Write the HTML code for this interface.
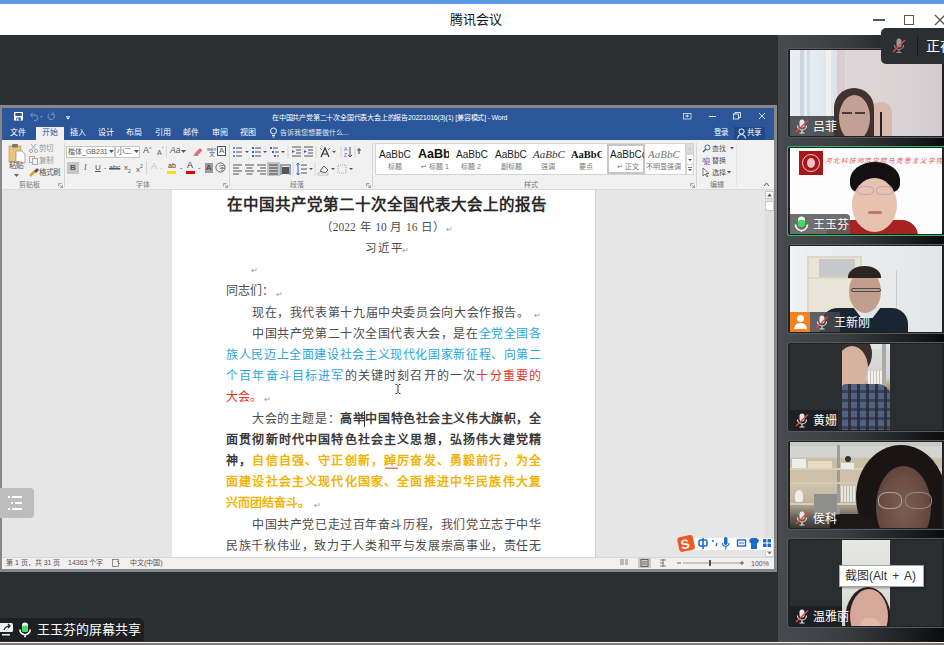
<!DOCTYPE html>
<html lang="zh-CN"><head><meta charset="utf-8">
<style>
*{margin:0;padding:0;box-sizing:border-box}
html,body{width:944px;height:645px;overflow:hidden;background:#2d3033;font-family:"Liberation Sans",sans-serif;position:relative}
.a{position:absolute}
#topstrip{left:0;top:0;width:944px;height:4px;background:#5a9ae4}
#titlebar{left:0;top:4px;width:944px;height:31px;background:#fff}
#title{left:450px;top:9px;font-size:13px;color:#111;white-space:nowrap}
#main{left:0;top:35px;width:778px;height:610px;background:#2d3033}
#rpanel{left:778px;top:35px;width:166px;height:610px;background:linear-gradient(90deg,#474a4e 0%,#3a3d41 40%,#1c1d1f 80%,#0b0b0c 100%)}
#word{left:0;top:105px;width:777px;height:467px;background:#878787}
#wblue{left:2px;top:108px;width:772px;height:32px;background:#2b579a}
#ribbon{left:2px;top:140px;width:772px;height:50px;background:#f1f1f1;border-bottom:1px solid #dadada}
#docbg{left:2px;top:190px;width:772px;height:367px;background:#e6e6e6}
#page{left:172px;top:190px;width:424px;height:367px;background:#fff;border-right:1px solid #d2d2d2}
#status{left:2px;top:557px;width:772px;height:12px;background:#f0f0f0;border-top:1px solid #d8d8d8}
</style></head><body>
<div class="a" id="topstrip"></div>
<div class="a" id="titlebar"></div>
<div class="a" id="title">腾讯会议</div>
<div class="a" id="main"></div>
<div class="a" id="rpanel"></div>
<div class="a" id="word"></div>
<div class="a" id="wblue"></div>
<div class="a" id="ribbon"></div>
<div class="a" id="docbg"></div>
<div class="a" id="page"></div>
<div class="a" id="status"></div>

<style>
.ln{position:absolute;white-space:nowrap;text-align:justify;text-align-last:justify;font-family:"Liberation Serif",serif;font-size:12px;line-height:14px;color:#4c4c4c;height:14px}
.b{font-weight:bold;color:#3a3a3a}
.cb{color:#2aa6df}
.cr{color:#e0352c}
.cg{color:#f2b400;font-weight:bold}
.pm{color:#999;font-size:8px;letter-spacing:0}
</style>
<div class="ln b" style="left:227px;top:196px;width:310px;font-size:15.5px;line-height:17px;height:17px;color:#2a2a2a">在中国共产党第二十次全国代表大会上的报告</div>
<div class="a pm" style="left:538px;top:203px">↵</div>
<div class="ln" style="left:321px;top:220px;width:123px;font-size:11.5px">（2022 年 10 月 16 日）</div>
<div class="a pm" style="left:446px;top:225px">↵</div>
<div class="ln" style="left:365px;top:241px;width:37px;font-size:11.5px">习近平</div>
<div class="a pm" style="left:402px;top:246px">↵</div>
<div class="a pm" style="left:251px;top:266px">↵</div>
<div class="ln" style="left:226px;top:284px;width:48px">同志们：</div>
<div class="a pm" style="left:276px;top:290px">↵</div>
<div class="ln" style="left:252px;top:306px;width:277px">现在，我代表第十九届中央委员会向大会作报告。</div>
<div class="a pm" style="left:534px;top:311px">↵</div>
<div class="ln" style="left:252px;top:327px;width:289px">中国共产党第二十次全国代表大会，是在<span class="cb">全党全国各</span></div>
<div class="ln cb" style="left:226px;top:348px;width:315px">族人民迈上全面建设社会主义现代化国家新征程、向第二</div>
<div class="ln" style="left:226px;top:369px;width:315px"><span class="cb">个百年奋斗目标进军</span>的关键时刻召开的一次<span class="cr">十分重要的</span></div>
<div class="ln cr" style="left:226px;top:390px;width:36px">大会。</div>
<div class="a pm" style="left:264px;top:395px">↵</div>
<div class="ln" style="left:252px;top:412px;width:289px">大会的主题是：<span class="b">高举中国特色社会主义伟大旗帜，全</span></div>
<div class="ln b" style="left:226px;top:433px;width:315px">面贯彻新时代中国特色社会主义思想，弘扬伟大建党精</div>
<div class="ln" style="left:226px;top:454px;width:315px"><span class="b">神，</span><span class="cg">自信自强、守正创新，踔厉奋发、勇毅前行，为全</span></div>
<div class="ln cg" style="left:226px;top:475px;width:315px">面建设社会主义现代化国家、全面推进中华民族伟大复</div>
<div class="ln cg" style="left:226px;top:496px;width:84px">兴而团结奋斗。</div>
<div class="a pm" style="left:314px;top:501px">↵</div>
<div class="ln" style="left:252px;top:518px;width:289px">中国共产党已走过百年奋斗历程，我们党立志于中华</div>
<div class="ln" style="left:226px;top:539px;width:315px">民族千秋伟业，致力于人类和平与发展崇高事业，责任无</div>

<style>
.wt{position:absolute;font-size:8px;line-height:9px;color:#fff;white-space:nowrap}
.rt{position:absolute;font-size:7.5px;line-height:9px;color:#555;white-space:nowrap}
.gl{position:absolute;font-size:7px;line-height:8px;color:#777;white-space:nowrap}
.sep{position:absolute;width:1px;background:#d6d6d6}
.ic{position:absolute}
</style>
<svg class="ic" style="left:395px;top:384px" width="6" height="10"><path d="M0.5 0.5h1.5l1 1 1-1h1.5M3 1.5v7M0.5 9.5h1.5l1-1 1 1h1.5" fill="none" stroke="#222" stroke-width="0.9"/></svg>
<div class="a" style="left:364px;top:411px;width:1px;height:16px;background:#333"></div>
<svg class="ic" style="left:385px;top:467px" width="14" height="3"><path d="M0 2l1-1.5 1 1.5 1-1.5 1 1.5 1-1.5 1 1.5 1-1.5 1 1.5 1-1.5 1 1.5 1-1.5 1 1.5 1-1.5" fill="none" stroke="#e02020" stroke-width="0.7"/></svg>
<!-- Word title bar -->
<svg class="ic" style="left:14px;top:112px" width="9" height="9" viewBox="0 0 9 9"><rect x="0" y="0" width="9" height="8.5" fill="#fff"/><rect x="1.3" y="1" width="6.4" height="3" fill="#2b579a"/><rect x="2.3" y="5.5" width="4.5" height="3" fill="#2b579a"/><rect x="3" y="6.5" width="1.5" height="2" fill="#fff"/></svg>
<svg class="ic" style="left:29px;top:111px" width="28" height="11" viewBox="0 0 28 11"><path d="M1.5 4h4.5a2.8 2.8 0 0 1 0 5.6H5M1.5 4l2.3-2.3M1.5 4l2.3 2.3" fill="none" stroke="#7c98c8" stroke-width="1"/><path d="M11 5h3l-1.5 1.8z" fill="#7c98c8"/><path d="M24 2.5a3.3 3.3 0 1 1-3.5 0" fill="none" stroke="#7c98c8" stroke-width="1"/><path d="M24 0.5v3h-2" fill="none" stroke="#7c98c8" stroke-width="0.9"/></svg>
<svg class="ic" style="left:66px;top:116px" width="4" height="4"><rect x="0" y="0" width="4" height="0.7" fill="#fff"/><path d="M0 1.5h4L2 3.5z" fill="#fff"/></svg>
<div class="wt" style="left:272px;top:113px;font-size:7px;letter-spacing:-0.2px">在中国共产党第二十次全国代表大会上的报告20221016(3)(1) [兼容模式] - Word</div>
<svg class="ic" style="left:683px;top:113px" width="9" height="7"><rect x="0.5" y="0.5" width="7.5" height="5.5" fill="none" stroke="#dfe6f0" stroke-width="0.8"/><path d="M2.5 3h3.5M4.2 1.5v3" stroke="#fff" stroke-width="0.8"/></svg>
<div class="a" style="left:709px;top:116px;width:7px;height:1px;background:#fff"></div>
<svg class="ic" style="left:733px;top:112px" width="8" height="8"><rect x="0.5" y="2" width="5" height="5" fill="none" stroke="#fff" stroke-width="0.8"/><path d="M2 2V0.5h5.5v5H5.5" fill="none" stroke="#fff" stroke-width="0.8"/></svg>
<svg class="ic" style="left:758px;top:112px" width="8" height="8"><path d="M1 1l6 6M7 1l-6 6" stroke="#fff" stroke-width="0.8"/></svg>
<!-- tabs -->
<div class="a" style="left:36px;top:127px;width:28px;height:13px;background:#f1f1f1"></div>
<div class="wt" style="left:10px;top:128px">文件</div>
<div class="wt" style="left:42px;top:128px;color:#2b579a">开始</div>
<div class="wt" style="left:70px;top:128px">插入</div>
<div class="wt" style="left:98px;top:128px">设计</div>
<div class="wt" style="left:126px;top:128px">布局</div>
<div class="wt" style="left:155px;top:128px">引用</div>
<div class="wt" style="left:183px;top:128px">邮件</div>
<div class="wt" style="left:212px;top:128px">审阅</div>
<div class="wt" style="left:240px;top:128px">视图</div>
<svg class="ic" style="left:270px;top:127px" width="7" height="11"><circle cx="3.5" cy="4" r="3" fill="none" stroke="#fff" stroke-width="0.9"/><path d="M2 8.5h3M2.5 10h2" stroke="#fff" stroke-width="0.9"/></svg>
<div class="wt" style="left:280px;top:128px;font-size:7px;color:#dfe6f0">告诉我您想要做什么...</div>
<div class="wt" style="left:714px;top:128px;font-size:7.5px">登录</div>
<div class="a" style="left:734px;top:127px;width:31px;height:13px;background:#1f4a87"></div>
<svg class="ic" style="left:737px;top:128px" width="9" height="11"><circle cx="4.5" cy="3.5" r="2.6" fill="none" stroke="#fff" stroke-width="1"/><path d="M0.5 10.5a4 4 0 0 1 8 0" fill="none" stroke="#fff" stroke-width="1"/></svg>
<div class="wt" style="left:747px;top:128px;font-size:7.5px">共享</div>

<!-- ribbon: clipboard -->
<svg class="ic" style="left:8px;top:143px" width="18" height="21" viewBox="0 0 18 21"><rect x="1" y="3" width="12" height="16" fill="#e9c77a" stroke="#b8964a" stroke-width="0.6"/><rect x="4" y="1" width="6" height="3.5" rx="1" fill="#777"/><path d="M8 8h6l3 3v9H8z" fill="#fff" stroke="#8a8a8a" stroke-width="0.7"/></svg>
<div class="rt" style="left:9px;top:161px">粘贴</div>
<svg class="ic" style="left:14px;top:174px" width="5" height="4"><path d="M0 0h5L2.5 3z" fill="#666"/></svg>
<svg class="ic" style="left:29px;top:144px" width="9" height="9"><circle cx="2" cy="7" r="1.6" fill="none" stroke="#aaa"/><circle cx="7" cy="7" r="1.6" fill="none" stroke="#aaa"/><path d="M2 6L7 0M7 6L2 0" stroke="#aaa"/></svg>
<div class="rt" style="left:39px;top:144px;color:#999">剪切</div>
<svg class="ic" style="left:29px;top:156px" width="10" height="9"><rect x="0.5" y="0.5" width="5" height="6" fill="none" stroke="#aaa"/><rect x="3.5" y="2.5" width="5" height="6" fill="#f1f1f1" stroke="#aaa"/></svg>
<div class="rt" style="left:39px;top:156px;color:#999">复制</div>
<svg class="ic" style="left:29px;top:168px" width="10" height="9"><path d="M1 8l5-5" stroke="#e0a030" stroke-width="2.5"/><path d="M5 3l3-3 2 2-3 3z" fill="#555"/></svg>
<div class="rt" style="left:39px;top:168px">格式刷</div>
<div class="gl" style="left:19px;top:181px">剪贴板</div>
<svg class="ic" style="left:58px;top:183px" width="5" height="5"><path d="M0.5 0.5h3M0.5 0.5v3M1.5 1.5l3 3M4.5 2v2.5H2" fill="none" stroke="#888" stroke-width="0.7"/></svg>
<div class="sep" style="left:64px;top:143px;height:44px"></div>

<!-- font group -->
<div class="a" style="left:66px;top:146px;width:49px;height:12px;background:#fff;border:1px solid #c6c6c6"></div>
<div class="rt" style="left:68px;top:147px;font-size:7px;width:40px;overflow:hidden">楷体_GB2312</div>
<svg class="ic" style="left:109px;top:150px" width="5" height="4"><path d="M0 0h5L2.5 3z" fill="#555"/></svg>
<div class="a" style="left:115px;top:146px;width:25px;height:12px;background:#fff;border:1px solid #c6c6c6"></div>
<div class="rt" style="left:117px;top:147px;font-size:7.5px">小二</div>
<svg class="ic" style="left:134px;top:150px" width="5" height="4"><path d="M0 0h5L2.5 3z" fill="#555"/></svg>
<div class="rt" style="left:143px;top:146px;font-size:9px">A</div><div class="rt" style="left:149px;top:145px;font-size:5px;color:#2b579a">^</div>
<div class="rt" style="left:157px;top:148px;font-size:7px">A</div><div class="rt" style="left:162px;top:145px;font-size:5px;color:#2b579a">ˇ</div>
<div class="sep" style="left:166px;top:146px;height:12px"></div>
<div class="rt" style="left:170px;top:146px;font-size:8.5px;font-style:italic">Aa</div>
<svg class="ic" style="left:181px;top:150px" width="5" height="4"><path d="M0 0h5L2.5 3z" fill="#555"/></svg>
<svg class="ic" style="left:193px;top:146px" width="10" height="10"><path d="M1 8l6-6 2.5 2.5-6 6z" fill="#e86a8a"/><path d="M0 9.5h5" stroke="#888" stroke-width="0.7"/></svg>
<div class="rt" style="left:207px;top:145px;font-size:5px;color:#555">wén</div><div class="rt" style="left:209px;top:150px;font-size:6px;color:#2b579a">文</div>
<div class="a" style="left:217px;top:146px;width:9px;height:10px;border:1px solid #555;background:#fff"></div><div class="rt" style="left:219px;top:146px;font-size:8px;line-height:10px">A</div>
<div class="a" style="left:67px;top:162px;width:12px;height:12px;background:#c6c6c6"></div>
<div class="rt" style="left:70px;top:163px;font-weight:bold;font-size:8px">B</div>
<div class="rt" style="left:84px;top:163px;font-style:italic;font-size:8px;font-family:'Liberation Serif',serif">I</div>
<div class="rt" style="left:95px;top:163px;text-decoration:underline;font-size:8px">U</div>
<div class="rt" style="left:104px;top:163px;font-size:7px">-</div>
<div class="rt" style="left:109px;top:163px;font-size:7px;text-decoration:line-through">abc</div>
<div class="rt" style="left:124px;top:163px;font-size:8px">x<sub style="font-size:5px;color:#2b579a">2</sub></div>
<div class="rt" style="left:136px;top:162px;font-size:8px">x<sup style="font-size:5px;color:#2b579a">2</sup></div>
<div class="sep" style="left:146px;top:162px;height:12px"></div>
<div class="rt" style="left:151px;top:162px;font-size:9px;color:#bbb">A</div>
<div class="rt" style="left:160px;top:163px;color:#bbb">-</div>
<div class="rt" style="left:168px;top:161px;font-size:7px;color:#333">ab</div><div class="a" style="left:167px;top:171px;width:9px;height:3px;background:#f4e300"></div>
<div class="rt" style="left:180px;top:163px">-</div>
<div class="rt" style="left:187px;top:161px;font-size:9px;color:#333">A</div><div class="a" style="left:186px;top:171px;width:9px;height:3px;background:#e00000"></div>
<div class="rt" style="left:198px;top:163px">-</div>
<div class="a" style="left:205px;top:163px;width:8px;height:10px;background:#9a9a9a"></div><div class="rt" style="left:206px;top:163px;font-size:8px;color:#333">A</div>
<svg class="ic" style="left:215px;top:162px" width="11" height="11"><circle cx="5.5" cy="5.5" r="4.6" fill="none" stroke="#555" stroke-width="0.9"/><text x="3.5" y="8" font-size="6" fill="#555">字</text></svg>
<div class="gl" style="left:136px;top:181px">字体</div>
<svg class="ic" style="left:223px;top:183px" width="5" height="5"><path d="M0.5 0.5h3M0.5 0.5v3M1.5 1.5l3 3M4.5 2v2.5H2" fill="none" stroke="#888" stroke-width="0.7"/></svg>
<div class="sep" style="left:229px;top:143px;height:44px"></div>

<!-- paragraph group -->
<svg class="ic" style="left:232px;top:146px" width="130" height="12" viewBox="0 0 130 12">
 <g fill="#2b6cc4"><circle cx="2" cy="2" r="1"/><circle cx="2" cy="6" r="1"/><circle cx="2" cy="10" r="1"/></g>
 <g stroke="#555" stroke-width="1"><path d="M4 2h6M4 6h6M4 10h6"/></g><path d="M13 5h4l-2 2z" fill="#555"/>
 <g fill="#2b6cc4" font-size="4"><rect x="20" y="1" width="2" height="2"/><rect x="20" y="5" width="2" height="2"/><rect x="20" y="9" width="2" height="2"/></g>
 <g stroke="#555"><path d="M23 2h6M23 6h6M23 10h6"/></g><path d="M31 5h4l-2 2z" fill="#555"/>
 <g fill="#2b6cc4"><rect x="38" y="1" width="2" height="2"/><rect x="40" y="5" width="2" height="2"/><rect x="42" y="9" width="2" height="2"/></g>
 <g stroke="#555"><path d="M41 2h5M43 6h4M45 10h2"/></g><path d="M49 5h4l-2 2z" fill="#555"/>
 <path d="M56 0v12" stroke="#d6d6d6"/>
 <g stroke="#555"><path d="M60 1h9M64 4h5M64 7h5M60 10h9"/></g><path d="M63 5.5l-3-1.5v3z" fill="#2b6cc4"/>
 <g stroke="#555"><path d="M72 1h9M76 4h5M76 7h5M72 10h9"/></g><path d="M72 4l3 1.5-3 1.5z" fill="#2b6cc4"/>
 <path d="M84 0v12" stroke="#d6d6d6"/>
 <path d="M89 11l4-9 4 9M90.5 8h5" fill="none" stroke="#333" stroke-width="1.2"/><path d="M88 2l2 2M98 2l-2 2" stroke="#2b6cc4"/><path d="M100 5h4l-2 2z" fill="#555"/>
 <path d="M109 0v12" stroke="#d6d6d6"/>
 <text x="112" y="5" font-size="5" fill="#2b6cc4">A</text><text x="112" y="11" font-size="5" fill="#a040c0">Z</text><path d="M118 1v10M116 9l2 2 2-2" fill="none" stroke="#555"/>
 <path d="M123 0v12" stroke="#d6d6d6"/>
 <path d="M127 2v6M125 4h4" stroke="#555" stroke-width="1.2"/>
</svg>
<svg class="ic" style="left:232px;top:162px" width="125" height="14" viewBox="0 0 125 14">
 <g stroke="#555" stroke-width="1"><path d="M1 3h9M1 6h6M1 9h9M1 12h6"/><path d="M13 3h9M14.5 6h6M13 9h9M14.5 12h6"/><path d="M25 3h9M28 6h6M25 9h9M28 12h6"/></g>
 <rect x="35" y="0" width="13" height="14" fill="#c4c4c4"/>
 <g stroke="#444"><path d="M37 3h9M37 6h9M37 9h9M37 12h9"/></g>
 <g stroke="#2b579a"><path d="M49 2v11M58 2v11"/></g><rect x="50" y="5" width="7" height="7" fill="#555"/><path d="M50 3h7" stroke="#555"/>
 <path d="M61 0v14" stroke="#d6d6d6"/>
 <g stroke="#555"><path d="M69 3h6M69 7h6M69 11h6"/></g><path d="M66 1v12" stroke="#2b6cc4"/><path d="M64.5 3l1.5-2 1.5 2M64.5 11l1.5 2 1.5-2" fill="none" stroke="#2b6cc4"/><path d="M77 6h4l-2 2z" fill="#555"/>
 <path d="M83 0v14" stroke="#d6d6d6"/>
 <path d="M88 9l4-5 4 4-3 3z" fill="none" stroke="#555"/><rect x="86" y="11" width="10" height="2" fill="#fff" stroke="#999" stroke-width="0.6"/><path d="M99 6h4l-2 2z" fill="#555"/>
 <rect x="106" y="3" width="8" height="8" fill="none" stroke="#aaa" stroke-dasharray="1 1"/><path d="M117 6h4l-2 2z" fill="#555"/>
</svg>
<div class="gl" style="left:290px;top:181px">段落</div>
<svg class="ic" style="left:366px;top:183px" width="5" height="5"><path d="M0.5 0.5h3M0.5 0.5v3M1.5 1.5l3 3M4.5 2v2.5H2" fill="none" stroke="#888" stroke-width="0.7"/></svg>
<div class="sep" style="left:372px;top:143px;height:44px"></div>

<!-- styles gallery -->
<div class="a" style="left:375px;top:143px;width:311px;height:32px;background:#fff;border:1px solid #d4d4d4"></div>
<div class="rt" style="left:379px;top:148px;font-size:10px;line-height:13px;color:#222">AaBbC</div><div class="gl" style="left:388px;top:163px">标题</div>
<div class="rt" style="left:418px;top:147px;font-size:12.5px;line-height:15px;font-weight:bold;color:#111;width:31px;overflow:hidden">AaBb</div><div class="gl" style="left:421px;top:163px">↵ 标题 1</div>
<div class="rt" style="left:456px;top:148px;font-size:10px;line-height:13px;color:#222">AaBbC</div><div class="gl" style="left:461px;top:163px">标题 2</div>
<div class="rt" style="left:495px;top:148px;font-size:10px;line-height:13px;color:#222">AaBbC</div><div class="gl" style="left:501px;top:163px">副标题</div>
<div class="rt" style="left:533px;top:148px;font-size:11px;line-height:13px;color:#333;font-style:italic;font-family:'Liberation Serif',serif">AaBbC</div><div class="gl" style="left:541px;top:163px">强调</div>
<div class="rt" style="left:571px;top:148px;font-size:10.5px;line-height:13px;color:#111;font-weight:bold;font-family:'Liberation Serif',serif;width:31px;overflow:hidden">AaBbC</div><div class="gl" style="left:579px;top:163px">要点</div>
<div class="a" style="left:607px;top:144px;width:38px;height:30px;border:2px solid #c6c6c6"></div>
<div class="rt" style="left:610px;top:148px;font-size:10px;line-height:13px;color:#222;width:34px;overflow:hidden">AaBbCc</div><div class="gl" style="left:617px;top:163px">↵ 正文</div>
<div class="rt" style="left:648px;top:148px;font-size:11px;line-height:13px;color:#777;font-style:italic;font-family:'Liberation Serif',serif;width:36px;overflow:hidden">AaBbC</div><div class="gl" style="left:646px;top:163px">不明显强调</div>
<div class="a" style="left:686px;top:143px;width:8px;height:32px;background:#fff;border:1px solid #d4d4d4"></div>
<div class="a" style="left:687px;top:144px;width:6px;height:10px;background:#dcdcdc"></div>
<div class="a" style="left:687px;top:154px;width:6px;height:1px;background:#d4d4d4"></div>
<div class="a" style="left:687px;top:164px;width:6px;height:1px;background:#d4d4d4"></div>
<svg class="ic" style="left:687px;top:145px" width="6" height="28"><path d="M1.5 5l1.5-1.5 1.5 1.5" fill="none" stroke="#aaa" stroke-width="0.7"/><path d="M1 14h4l-2 2z" fill="#555"/><path d="M1 22.5h4" stroke="#555" stroke-width="0.8"/><path d="M1 24h4l-2 2z" fill="#555"/></svg>
<div class="sep" style="left:736px;top:143px;height:44px;background:#e4e4e4"></div>
<div class="gl" style="left:524px;top:181px">样式</div>
<svg class="ic" style="left:690px;top:183px" width="5" height="5"><path d="M0.5 0.5h3M0.5 0.5v3M1.5 1.5l3 3M4.5 2v2.5H2" fill="none" stroke="#888" stroke-width="0.7"/></svg>
<div class="sep" style="left:696px;top:143px;height:44px"></div>
<!-- editing -->
<svg class="ic" style="left:702px;top:144px" width="9" height="9"><circle cx="5.5" cy="3.5" r="2.5" fill="none" stroke="#2b6cc4" stroke-width="1"/><path d="M4 5L1 8" stroke="#555" stroke-width="1.2"/></svg>
<div class="rt" style="left:712px;top:144px;font-size:7px">查找</div><svg class="ic" style="left:730px;top:147px" width="4" height="3"><path d="M0 0h4L2 2.5z" fill="#555"/></svg>
<div class="rt" style="left:702px;top:155px;font-size:7px;color:#2b6cc4">ab</div><div class="rt" style="left:704px;top:159px;font-size:6px;color:#a040c0">ac</div>
<div class="rt" style="left:712px;top:156px;font-size:7px">替换</div>
<svg class="ic" style="left:702px;top:167px" width="8" height="10"><path d="M1 1v8l2-2 2 3 1-.5-2-3h3z" fill="#fff" stroke="#555" stroke-width="0.8"/></svg>
<div class="rt" style="left:712px;top:168px;font-size:7px">选择</div><svg class="ic" style="left:727px;top:171px" width="4" height="3"><path d="M0 0h4L2 2.5z" fill="#555"/></svg>
<div class="gl" style="left:710px;top:181px">编辑</div>
<svg class="ic" style="left:763px;top:182px" width="7" height="5"><path d="M1 4l2.5-3 2.5 3" fill="none" stroke="#555" stroke-width="1"/></svg>

<!-- scrollbar -->
<div class="a" style="left:765px;top:190px;width:9px;height:367px;background:#e0e0e0"></div>
<div class="a" style="left:765px;top:191px;width:9px;height:8px;background:#fff;border:1px solid #c8c8c8"></div>
<svg class="ic" style="left:767px;top:193px" width="5" height="4"><path d="M0 3.5h5L2.5 0.5z" fill="#555"/></svg>
<div class="a" style="left:765px;top:201px;width:9px;height:10px;background:#fff;border:1px solid #c8c8c8"></div>


<!-- status bar -->
<div class="gl" style="left:6px;top:559px;color:#555">第 1 页，共 31 页</div>
<div class="gl" style="left:68px;top:559px;color:#555">14363 个字</div>
<svg class="ic" style="left:112px;top:559px" width="9" height="8"><rect x="0.5" y="0.5" width="6" height="7" fill="none" stroke="#777" stroke-width="0.8"/><path d="M5 2l3 3" stroke="#777"/></svg>
<div class="gl" style="left:130px;top:559px;color:#555">中文(中国)</div>
<svg class="ic" style="left:619px;top:558px" width="150" height="10" viewBox="0 0 150 10">
 <path d="M1 2h4M1 4h4M1 6h4M6 2h3M6 4h3M6 6h3" stroke="#666" stroke-width="0.8"/>
 <rect x="19" y="0" width="13" height="10" fill="#c8c8c8"/><rect x="22" y="1.5" width="7" height="7" fill="none" stroke="#555" stroke-width="0.9"/><path d="M23 4h5M23 6h5" stroke="#555" stroke-width="0.7"/>
 <path d="M41 2h6M41 5h4M41 8h6M44 1v8" stroke="#666" stroke-width="0.8"/>
 <path d="M58 5h4" stroke="#666"/><path d="M64 5h60" stroke="#888" stroke-width="0.8"/><rect x="90" y="2" width="2" height="6" fill="#555"/>
 <path d="M121 5h4M123 3v4" stroke="#666"/>
 <text x="132" y="8" font-size="7" fill="#555" font-family="Liberation Sans">100%</text>
</svg>
<!-- Sogou IME bar -->
<div class="a" style="left:765px;top:549px;width:9px;height:8px;background:#fff;border:1px solid #d0d0d0"></div>
<svg class="ic" style="left:767px;top:551px" width="5" height="4"><path d="M0 0.5h5L2.5 3.5z" fill="#777"/></svg>
<svg class="ic" style="left:676px;top:533px" width="98" height="20" viewBox="0 0 98 20">
 <rect x="14" y="5" width="83" height="12" fill="#fff"/>
 <g transform="rotate(-12 10 10)"><rect x="2" y="3" width="16" height="15" rx="3" fill="#ee5a24"/><text x="4.5" y="15.5" font-size="13" font-weight="bold" fill="#fff" font-family="Liberation Sans">S</text></g>
 <rect x="23" y="7" width="8" height="6" rx="1.5" fill="none" stroke="#1a6ad0" stroke-width="1.6"/><path d="M27 5v11" stroke="#1a6ad0" stroke-width="1.6"/>
 <circle cx="37" cy="8" r="1" fill="#1a6ad0"/><path d="M41 10l-1 3" stroke="#1a6ad0" stroke-width="1.4"/>
 <rect x="48" y="4" width="3.5" height="8" rx="1.7" fill="#1a6ad0"/><path d="M46.5 10a3.3 3.3 0 0 0 6.6 0M49.8 13.5v3" fill="none" stroke="#1a6ad0" stroke-width="1.1"/>
 <rect x="61.5" y="7" width="8" height="6" fill="none" stroke="#1a6ad0" stroke-width="1.4"/><path d="M63 10h5" stroke="#1a6ad0" stroke-width="1"/>
 <path d="M73 7l2.5-2h5l2.5 2-1 3h-1v6h-6v-6h-1z" fill="#1a6ad0"/>
 <g fill="#1a6ad0"><rect x="87" y="6" width="3.5" height="3.5" rx="0.6"/><rect x="91.5" y="6" width="3.5" height="3.5" rx="0.6"/><rect x="87" y="10.5" width="3.5" height="3.5" rx="0.6"/><rect x="91.5" y="10.5" width="3.5" height="3.5" rx="0.6"/></g>
</svg>

<style>
.tile{position:absolute;left:787px;width:157px;height:90px;background:#1f2123;border:1px solid #55585c;border-right:none;border-radius:3px 0 0 3px}
.vid{position:absolute;left:790px;width:152px;height:86px;overflow:hidden}
.lab{position:absolute;left:0;height:20px;bottom:0}
.nm{position:absolute;color:#fff;font-size:12px;line-height:14px;white-space:nowrap}
.el{position:absolute;border-radius:50%}
</style>
<!-- Tencent window controls -->
<div class="a" style="left:873px;top:19px;width:12px;height:1.5px;background:#555"></div>
<div class="a" style="left:904px;top:15px;width:10px;height:10px;border:1.3px solid #555"></div>
<svg class="ic" style="left:934px;top:14px" width="10" height="12"><path d="M1 1l10 10M11 1L1 11" stroke="#555" stroke-width="1.3"/></svg>

<!-- tiles frames -->
<div class="tile" style="top:48px"></div>
<div class="tile" style="top:146px;border:1.5px solid #1fc060;border-right:none"></div>
<div class="tile" style="top:244px"></div>
<div class="tile" style="top:342px"></div>
<div class="tile" style="top:440px"></div>
<div class="tile" style="top:538px"></div>

<!-- tile 1 -->
<div class="vid" style="top:50px;background:linear-gradient(90deg,#e9eff3 0,#e3eaef 20%,#dde4ea 29%,#e4dfe2 31%,#ddd4d7 38%,#dcd3d5 65%,#d2cccd 100%)">
 <div class="a" style="left:10px;top:0;width:4px;height:66px;background:#cbd5df"></div>
 <div class="a" style="left:17px;top:0;width:3px;height:66px;background:#d3dce5"></div>
 <div class="a" style="left:36px;top:0;width:5px;height:86px;background:#f1f1f2"></div>
 <div class="a" style="left:47px;top:0;width:8px;height:86px;background:#d8cdd0"></div>
 <div class="a" style="left:80px;top:52px;width:22px;height:36px;border-radius:10px 10px 0 0;background:#d9b9ae"></div>
 <div class="a" style="left:90px;top:62px;width:2px;height:24px;background:#2a2422"></div>
 <div class="el" style="left:44px;top:38px;width:40px;height:40px;background:#41322e"></div>
 <div class="a" style="left:44px;top:58px;width:40px;height:30px;background:#41322e"></div>
 <div class="el" style="left:49px;top:45px;width:31px;height:46px;background:#c2a194"></div>
 <div class="a" style="left:52px;top:62px;width:10px;height:1.5px;background:#4a3a36"></div>
 <div class="a" style="left:65px;top:62px;width:10px;height:1.5px;background:#4a3a36"></div>
 <div class="lab" style="width:48px;background:rgba(50,52,55,.82)"></div>
</div>
<!-- tile 2 -->
<div class="vid" style="top:148px;background:#fdfdfd">
 <div class="a" style="left:9px;top:3px;width:24px;height:24px;background:#a3171b"></div>
 <div class="el" style="left:12px;top:6px;width:18px;height:18px;border:1.5px solid #f0c8c8"></div>
 <div class="el" style="left:17px;top:10px;width:8px;height:10px;background:#efc2c2"></div>
 <div class="a" style="left:35px;top:9px;color:#e03030;font-size:6.5px;line-height:8px;font-style:italic;font-family:'Liberation Serif',serif;letter-spacing:0.9px;white-space:nowrap;opacity:.85">河北科技师范学院马克思主义学院</div>
 <div class="a" style="left:36px;top:72px;width:92px;height:20px;border-radius:16px 16px 0 0;background:#a82222"></div>
 <div class="el" style="left:60px;top:14px;width:50px;height:36px;background:#121010"></div>
 <div class="a" style="left:60px;top:30px;width:50px;height:14px;background:#121010;border-radius:0 0 8px 8px"></div>
 <div class="el" style="left:62px;top:30px;width:45px;height:54px;background:#e8c1af"></div>
 <div class="a" style="left:67px;top:38px;width:17px;height:9px;border:1px solid #c7a4b6;border-radius:40%"></div>
 <div class="a" style="left:86px;top:38px;width:17px;height:9px;border:1px solid #c7a4b6;border-radius:40%"></div>
 <div class="a" style="left:78px;top:63px;width:14px;height:3px;border-radius:2px;background:#b97a78"></div>
 <div class="lab" style="width:60px;background:rgba(95,95,97,.9);border-radius:0 4px 0 0"></div>
</div>
<!-- tile 3 -->
<div class="vid" style="top:246px;background:linear-gradient(90deg,#f1f3f4 0,#eceeef 12%,#e8eaeb 60%,#e3e5e6 100%)">
 <div class="a" style="left:17px;top:10px;width:55px;height:60px;background:#e8e5d8;border:2px solid #ddd8c6"></div>
 <div class="a" style="left:29px;top:13px;width:36px;height:18px;background:#c5c9ca"></div>
 <div class="a" style="left:19px;top:31px;width:51px;height:2px;background:#dcd7c6"></div>
 <div class="a" style="left:106px;top:24px;width:1px;height:45px;background:#c8cacb"></div>
 <div class="a" style="left:30px;top:62px;width:88px;height:30px;border-radius:18px 16px 0 0;background:#1a2533"></div>
 <div class="a" style="left:63px;top:61px;width:28px;height:11px;background:#e3e4e8;clip-path:polygon(0 0,100% 0,70% 100%,30% 100%)"></div>
 <div class="el" style="left:59px;top:24px;width:32px;height:43px;background:#c29e8c"></div>
 <div class="el" style="left:58px;top:20px;width:33px;height:22px;background:#2b2420;clip-path:inset(0 0 45% 0)"></div>
 <div class="a" style="left:61px;top:42px;width:30px;height:4px;border:1px solid #4a4a4a;border-radius:2px"></div>
 <div class="lab" style="width:50px;background:rgba(70,72,75,.85)"></div>
 <div class="lab" style="width:20px;background:#f5821f"></div>
 <div class="el" style="left:7px;top:69px;width:7px;height:7px;background:#fff"></div>
 <div class="a" style="left:4px;top:77px;width:13px;height:6px;border-radius:6px 6px 0 0;background:#fff"></div>
</div>
<!-- tile 4 -->
<div class="vid" style="top:344px;background:#2b2e31">
 <div class="a" style="left:52px;top:0;width:48px;height:86px;overflow:hidden;background:linear-gradient(180deg,#dededc 0,#d6d6d4 30%,#cfcfcd 40%,#b8a890 47%,#a8927a 52%,#44526a 56%,#3e4b62 100%)">
  <div class="a" style="left:0;top:0;width:48px;height:5px;background:#e4e4e2"></div>
  <div class="a" style="left:40px;top:0;width:4px;height:56px;background:#a9a9a7"></div>
  <div class="a" style="left:26px;top:27px;width:14px;height:14px;background:repeating-linear-gradient(90deg,#f2f0ea 0,#f2f0ea 2px,#c8c4ba 2px,#c8c4ba 3px)"></div>
  <div class="el" style="left:-10px;top:-12px;width:40px;height:44px;background:#3a2e2a"></div>
  <div class="el" style="left:-6px;top:2px;width:32px;height:44px;background:#d8b2a0"></div>
  <div class="a" style="left:0;top:40px;width:48px;height:46px;border-radius:4px 12px 0 0;background:repeating-linear-gradient(90deg,#506280 0,#506280 6px,#2f3444 6px,#2f3444 9px),#44526a"></div>
  <div class="a" style="left:0;top:40px;width:48px;height:46px;border-radius:4px 12px 0 0;background:repeating-linear-gradient(180deg,rgba(40,36,50,0) 0,rgba(40,36,50,0) 6px,rgba(40,36,50,.55) 6px,rgba(40,36,50,.55) 9px)"></div>
 </div>
 <div class="lab" style="width:48px;background:#1d1f22"></div>
</div>
<!-- tile 5 -->
<div class="vid" style="top:442px;background:linear-gradient(180deg,#d4d4d1 0,#d3d3d0 17%,#cbbca4 20%,#cfc2ac 50%,#c2b49c 70%,#6c665e 86%,#3a3632 100%)">
 <div class="a" style="left:0;top:0;width:152px;height:4px;background:#c8c8c5"></div>
 <div class="a" style="left:47px;top:3px;width:3px;height:80px;background:#9c9c9a"></div>
 <div class="a" style="left:0;top:26px;width:152px;height:2px;background:#dccfb8"></div>
 <div class="a" style="left:0;top:40px;width:152px;height:2px;background:#d8cab2"></div>
 <div class="a" style="left:0;top:61px;width:80px;height:2px;background:#d8ccb8"></div>
 <div class="a" style="left:2px;top:17px;width:14px;height:9px;background:#eeeeea"></div>
 <div class="a" style="left:18px;top:19px;width:24px;height:7px;background:#e9dcc4"></div>
 <div class="a" style="left:51px;top:21px;width:13px;height:6px;background:#ecebe8"></div>
 <div class="el" style="left:55px;top:14px;width:6px;height:6px;background:#333"></div>
 <div class="a" style="left:5px;top:48px;width:8px;height:12px;border-radius:50% 50% 2px 2px;background:#f0eeea"></div>
 <div class="a" style="left:24px;top:52px;width:23px;height:20px;background:#8e8e8c"></div>
 <div class="a" style="left:51px;top:44px;width:14px;height:16px;background:repeating-linear-gradient(90deg,#e8e6e0 0,#e8e6e0 2px,#b8b4aa 2px,#b8b4aa 3px)"></div>
 <div class="el" style="left:66px;top:3px;width:90px;height:104px;background:#1a1514"></div>
 <div class="a" style="left:120px;top:40px;width:32px;height:46px;background:#1a1514"></div>
 <div class="el" style="left:86px;top:24px;width:55px;height:82px;background:radial-gradient(ellipse at 50% 50%,#7d5e53 0,#6c4e44 50%,#503a33 100%)"></div>
 <div class="a" style="left:88px;top:50px;width:24px;height:17px;border:1.2px solid #a9a39b;border-radius:40%"></div>
 <div class="a" style="left:115px;top:50px;width:27px;height:17px;border:1.2px solid #8f8a84;border-radius:40%"></div>
 <div class="a" style="left:40px;top:72px;width:46px;height:14px;border-radius:10px 10px 0 0;background:#1a1716"></div>
</div>
<!-- tile 6 -->
<div class="vid" style="top:540px;background:#2b2e31">
 <div class="a" style="left:52px;top:0;width:48px;height:86px;overflow:hidden;background:linear-gradient(180deg,#e6e6e3 0,#dfdfdb 60%,#cfcfcb 100%)">
  <div class="el" style="left:3px;top:47px;width:46px;height:66px;background:#2b1f1e"></div>
  <div class="el" style="left:8px;top:49px;width:38px;height:54px;background:#d6a89c"></div>
  <div class="a" style="left:18px;top:78px;width:20px;height:8px;border-radius:8px 8px 0 0;background:#e4b8ab"></div>
 </div>
 <div class="lab" style="width:52px;background:#1d1f22"></div>
</div>
<!-- labels text & mic icons -->
<svg class="ic" style="left:795px;top:119px" width="14" height="15" viewBox="0 0 14 15"><rect x="4.5" y="0.5" width="5" height="8" rx="2.5" fill="#e8e8e8"/><path d="M2.5 6.5a4.5 4.5 0 0 0 9 0M7 11v3M4.5 14h5" fill="none" stroke="#e8e8e8" stroke-width="1.2"/><path d="M1 13L13 1.5" stroke="#e8453c" stroke-width="1.5"/></svg>
<div class="nm" style="left:813px;top:120px">吕菲</div>
<svg class="ic" style="left:794px;top:216px" width="15" height="16" viewBox="0 0 15 16"><rect x="4" y="0.5" width="7" height="10" rx="3.5" fill="#fff"/><rect x="4" y="4" width="7" height="6.5" rx="1.5" fill="#3ce05a"/><path d="M1.5 8.5a6 6 0 0 0 12 0M7.5 14.5v1.5" fill="none" stroke="#fff" stroke-width="1.6"/></svg>
<div class="nm" style="left:813px;top:218px">王玉芬</div>
<svg class="ic" style="left:815px;top:315px" width="14" height="15" viewBox="0 0 14 15"><rect x="4.5" y="0.5" width="5" height="8" rx="2.5" fill="#e8e8e8"/><path d="M2.5 6.5a4.5 4.5 0 0 0 9 0M7 11v3M4.5 14h5" fill="none" stroke="#e8e8e8" stroke-width="1.2"/><path d="M1 13L13 1.5" stroke="#e8453c" stroke-width="1.5"/></svg>
<div class="nm" style="left:834px;top:316px">王新刚</div>
<svg class="ic" style="left:795px;top:413px" width="14" height="15" viewBox="0 0 14 15"><rect x="4.5" y="0.5" width="5" height="8" rx="2.5" fill="#e8e8e8"/><path d="M2.5 6.5a4.5 4.5 0 0 0 9 0M7 11v3M4.5 14h5" fill="none" stroke="#e8e8e8" stroke-width="1.2"/><path d="M1 13L13 1.5" stroke="#e8453c" stroke-width="1.5"/></svg>
<div class="nm" style="left:813px;top:414px">黄姗</div>
<svg class="ic" style="left:795px;top:511px" width="14" height="15" viewBox="0 0 14 15"><rect x="4.5" y="0.5" width="5" height="8" rx="2.5" fill="#e8e8e8"/><path d="M2.5 6.5a4.5 4.5 0 0 0 9 0M7 11v3M4.5 14h5" fill="none" stroke="#e8e8e8" stroke-width="1.2"/><path d="M1 13L13 1.5" stroke="#e8453c" stroke-width="1.5"/></svg>
<div class="nm" style="left:813px;top:512px">侯科</div>
<svg class="ic" style="left:795px;top:609px" width="14" height="15" viewBox="0 0 14 15"><rect x="4.5" y="0.5" width="5" height="8" rx="2.5" fill="#e8e8e8"/><path d="M2.5 6.5a4.5 4.5 0 0 0 9 0M7 11v3M4.5 14h5" fill="none" stroke="#e8e8e8" stroke-width="1.2"/><path d="M1 13L13 1.5" stroke="#e8453c" stroke-width="1.5"/></svg>
<div class="nm" style="left:813px;top:610px">温雅丽</div>

<!-- tooltip -->
<div class="a" style="left:839px;top:565px;width:85px;height:22px;background:#fff;border:1px solid #a8a8a8;box-shadow:1px 1px 2px rgba(0,0,0,.35)"></div>
<div class="a" style="left:845px;top:569px;font-size:12px;line-height:14px;color:#333;white-space:nowrap;word-spacing:2px">截图(Alt + A)</div>

<!-- popup top right -->
<div class="a" style="left:881px;top:28px;width:70px;height:36px;background:#2c2f32;border-radius:5px"></div>
<svg class="ic" style="left:892px;top:38px" width="14" height="16" viewBox="0 0 14 16"><rect x="4.5" y="0.5" width="5" height="9" rx="2.5" fill="#9a9a9a"/><path d="M2.5 7a4.5 4.5 0 0 0 9 0M7 11.5v3M4.5 14.5h5" fill="none" stroke="#9a9a9a" stroke-width="1.1"/><path d="M1 14L13 2" stroke="#e8453c" stroke-width="1.4"/></svg>
<div class="a" style="left:917px;top:36px;width:1px;height:20px;background:#17191b"></div>
<div class="a" style="left:926px;top:38px;font-size:14px;line-height:16px;color:#fff;white-space:nowrap">正在</div>

<!-- left floating button -->
<div class="a" style="left:0;top:488px;width:34px;height:30px;background:#bdbdbd;border-radius:0 4px 4px 0"></div>
<svg class="ic" style="left:7px;top:495px" width="18" height="16"><g fill="#fff"><rect x="1" y="1" width="2" height="2"/><rect x="4" y="7" width="2" height="2"/><rect x="1" y="13" width="2" height="2"/><rect x="5" y="1" width="10" height="2"/><rect x="8" y="7" width="7" height="2"/><rect x="5" y="13" width="10" height="2"/></g></svg>

<!-- bottom share label -->
<div class="a" style="left:0;top:618px;width:144px;height:23px;background:#1d1f22;border-radius:0 5px 0 0"></div>
<svg class="ic" style="left:0;top:622px" width="14" height="15" viewBox="0 0 14 15"><rect x="-2" y="1" width="15" height="9" rx="1.5" fill="#f0f0f0"/><path d="M4 8c1-3 3-4 6-4M8 2l2 2-2 2" fill="none" stroke="#1d1f22" stroke-width="1.2"/><rect x="2" y="12" width="8" height="1.5" fill="#f0f0f0"/></svg>
<svg class="ic" style="left:18px;top:622px" width="14" height="16" viewBox="0 0 14 16"><rect x="4" y="0.5" width="6" height="9.5" rx="3" fill="#fff"/><rect x="4" y="3.5" width="6" height="6.5" rx="1.5" fill="#3ce05a"/><path d="M1.8 7.5a5.2 5.2 0 0 0 10.4 0M7 12.8v2.5" fill="none" stroke="#fff" stroke-width="1.6"/></svg>
<div class="a" style="left:37px;top:622px;font-size:13px;line-height:15px;color:#fff;white-space:nowrap">王玉芬的屏幕共享</div>
<div class="a" style="left:0;top:642px;width:944px;height:1px;background:#f2f2f2"></div>
<div class="a" style="left:0;top:643px;width:944px;height:2px;background:#7d7a78"></div>
</body></html>
